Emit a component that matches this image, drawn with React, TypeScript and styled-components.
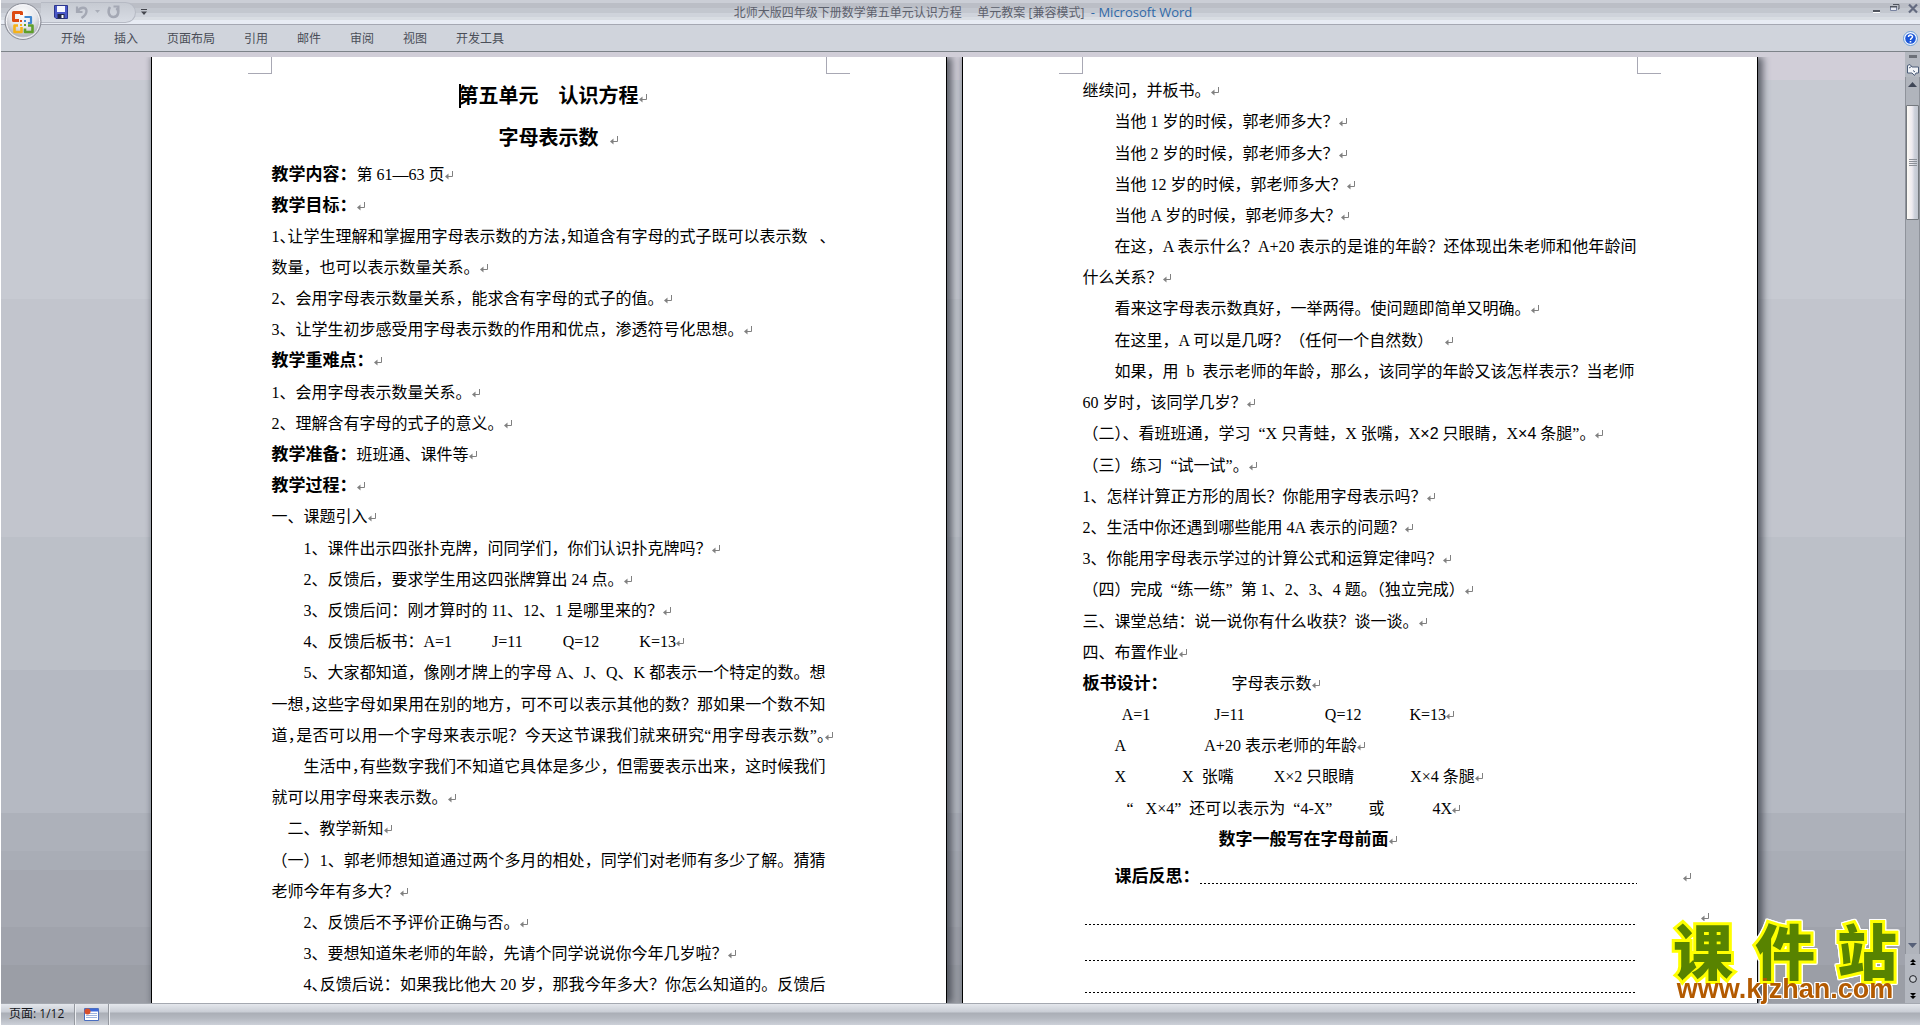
import React from "react";
import styled, { createGlobalStyle, css } from "styled-components";

const ui = `"Open Sans", "Noto Sans CJK SC", sans-serif`;
const doc = `"Liberation Serif", "Noto Sans CJK SC", serif`;

const GlobalStyle = createGlobalStyle`
  * { box-sizing: border-box; }
  body { margin: 0; overflow: hidden; background: #fff; }
  button { border: 0; padding: 0; background: none; color: inherit; font: inherit; cursor: default; }
  svg { display: block; }
`;

const Window = styled.div`
  display: flex;
  flex-direction: column;
  height: 100vh;
  padding-left: 1px;
  font: 12px/16px ${ui};
  color: #4a4e58;
  position: relative;
`;

/* ---------- title bar ---------- */

const TitleBar = styled.header`
  display: grid;
  grid-template-columns: 1fr auto 1fr;
  height: 25px;
  padding-left: 5px;
  border-bottom: 1px solid #a5a8b2;
  background: linear-gradient(#cbced6 0 3px, #bbbec6 3px 8px, #c3c7cf 8px 13px, #cfd3db 13px 17px, #d9dde3 17px 20px, #e8ecf4 20px);
`;

const QuickAccess = styled.div`
  display: flex;
  align-items: flex-start;
`;

const Pill = styled.div`
  display: flex;
  align-items: center;
  gap: 7px;
  height: 21px;
  margin: 2px 0 0 35px;
  padding: 0 15px 2px 13px;
  border: 1px solid #b6bac4;
  border-left: 0;
  border-radius: 0 11px 11px 0;
  background: linear-gradient(#c6cad2, #d8dce4);
`;

const Customize = styled.button`
  margin: 9px 0 0 5px;
`;

const Caption = styled.h1`
  margin: 0;
  padding-top: 2px;
  font: 400 12px/20px ${ui};
  white-space: pre;
  color: #5c606c;
`;

const Product = styled.span`
  font-size: 13px;
  color: #2f6aa8;
`;

const WindowButtons = styled.div`
  display: flex;
  justify-content: flex-end;
  align-items: flex-start;
  gap: 8px;
  padding: 3px 2px 0 0;
`;

const OfficeButton = styled.button`
  position: absolute;
  top: 2px;
  left: 4px;
  z-index: 2;
`;

/* ---------- ribbon tabs ---------- */

const Ribbon = styled.nav`
  display: flex;
  align-items: stretch;
  height: 27px;
  padding: 0 2px 0 46px;
  gap: 1px;
  border-bottom: 1px solid #7d8389;
  background: #d0d4dc;
`;

const Tab = styled.button`
  padding: 2px 14px 0;
`;

const Help = styled.button`
  margin-left: auto;
`;

/* ---------- work area ---------- */

const Work = styled.div`
  display: flex;
  flex: 1;
  min-height: 0;
`;

const Canvas = styled.main`
  flex: 1;
  display: flex;
  justify-content: center;
  gap: 15px;
  min-width: 0;
  padding: 5px 0 0 2px;
  overflow: hidden;
  background: linear-gradient(
    #d1ced8 28px,
    #c7cad2 28px 26%,
    #c2c5cd 26% 51%,
    #bcc0c8 51% 65%,
    #b5b9c2 65% 80%,
    #adb1ba 80% 84%,
    #a9adb6 84% 86%,
    #a5a8b1 86% 92%,
    #a0a3ac 92% 96%,
    #9b9ea6 96%
  );
`;

const Page = styled.article`
  flex: 0 0 796px;
  min-width: 0;
  padding: 18px 120px 0;
  border: solid #000;
  border-width: 0 1px;
  background: #fff;
  box-shadow: -2px 0 4px rgba(90, 94, 104, 0.35), 5px 0 7px rgba(60, 64, 74, 0.75);
  clip-path: inset(0 -14px 0 -8px);
  position: relative;
`;

const CropMark = styled.i<{ $side: "left" | "right" }>`
  position: absolute;
  top: 0;
  width: 24px;
  height: 17px;
  border-bottom: 1px solid #a8a8b4;
  ${(p) =>
    p.$side === "left"
      ? css`left: 96px; border-right: 1px solid #a8a8b4;`
      : css`right: 96px; border-left: 1px solid #a8a8b4;`}
`;

const Title = styled.h2`
  margin: 0;
  font: 700 20px/42px ${doc};
  color: #000;
  text-align: center;
  white-space: pre;
`;

const Caret = styled.span`
  display: inline-block;
  width: 2px;
  height: 24px;
  margin-right: -2px;
  vertical-align: -5px;
  background: #000;
`;

const Line = styled.p<{ $indent?: number; $tall?: boolean; $fill?: boolean }>`
  margin: 0;
  padding-left: ${(p) => (p.$indent ?? 0) * 16}px;
  font: 16px/${(p) => (p.$tall ? 32 : 31)}px ${doc};
  color: #000;
  white-space: ${(p) => (p.$fill ? "nowrap" : "pre")};
  text-align-last: ${(p) => (p.$fill ? "justify" : "left")};
`;

const Label = styled.b`
  font-size: 17px;
`;

const Half = styled.span`
  font-feature-settings: "halt";
`;

const Sans = styled.span`
  font-family: "Liberation Sans", sans-serif;
`;

const Mark = styled.svg<{ $gap: number }>`
  display: inline-block;
  width: 8px;
  height: 9px;
  margin-left: ${(p) => p.$gap}px;
  margin-right: ${(p) => -8 - p.$gap}px;
`;

const NoteRow = styled.div<{ $height: number }>`
  display: flex;
  align-items: flex-end;
  height: ${(p) => p.$height}px;
  padding-left: 2px;
  font: 16px/31px ${doc};
  color: #000;
`;

const NoteLabel = styled.span`
  padding-left: 30px;
`;

const Dots = styled.span<{ $raise?: boolean }>`
  flex: 1;
  height: 1px;
  margin-bottom: ${(p) => (p.$raise ? 8 : 0)}px;
  background: repeating-linear-gradient(90deg, #000 0 2px, transparent 2px 4px);
`;

const Outside = styled.span<{ $gap: number; $line: number }>`
  width: 0;
  line-height: ${(p) => p.$line}px;
  text-indent: ${(p) => p.$gap}px;
  white-space: nowrap;
`;

/* ---------- scroll bar ---------- */

const Scroll = styled.aside`
  display: flex;
  flex-direction: column;
  width: 15px;
  background: #b4b8c0;
`;

const SplitBox = styled.button`
  height: 3px;
  margin: 3px 3px 4px 4px;
  background: #6c7078;
`;

const RulerButton = styled.button`
  height: 15px;
  padding-left: 2px;
`;

const Track = styled.div`
  display: flex;
  flex-direction: column;
  flex: 1;
  border: solid #8f939b;
  border-width: 0 1px;
  background: #b0b4bc;
`;

const Arrow = styled.button`
  display: flex;
  justify-content: center;
  height: 16px;
  padding-top: 5px;
`;

const Thumb = styled.div`
  display: flex;
  align-items: center;
  justify-content: center;
  height: 115px;
  margin-top: 12px;
  border: 1px solid #74787e;
  border-radius: 1px;
  background: linear-gradient(90deg, #fcfaf4, #eeeaf0 45%, #ccd0da 70%, #c2c6d0);
`;

const Spacer = styled.div`
  flex: 1;
`;

const Browse = styled.div`
  display: flex;
  flex-direction: column;
  align-items: center;
  justify-content: space-around;
  height: 49px;
`;

/* ---------- status bar ---------- */

const StatusBar = styled.footer`
  display: flex;
  height: 22px;
  border-top: 1px solid #a4a8b0;
  background: linear-gradient(#e4e7ec, #c9cdd5 8px, #aaaeb6 9px, #b4b8c0 14px, #ccd0d8);
  color: #14161c;
`;

const StatusItem = styled.button`
  display: flex;
  align-items: center;
  padding: 0 10px 2px 8px;
  border-right: 1px solid #94989f;
  box-shadow: 1px 0 #eceef2;
  font-size: 12px;
`;

const MacroItem = styled(StatusItem)`
  padding: 0 9px;
`;

/* ---------- watermark ---------- */

const Watermark = styled.div`
  position: absolute;
  right: 23px;
  bottom: 22px;
  z-index: 3;
  width: 224px;
  filter: drop-shadow(1px 0 #fff) drop-shadow(-1px 0 #fff) drop-shadow(0 1px #fff) drop-shadow(0 -1px #fff);
`;

const Brand = styled.div`
  display: flex;
  justify-content: space-between;
  font: 900 60px/52px "Noto Sans CJK SC", sans-serif;
  color: #588300;
  -webkit-text-stroke: 6px #ffff00;
  paint-order: stroke fill;
`;

const Site = styled.a`
  display: block;
  font: 700 27px/28px "Liberation Sans", sans-serif;
  color: #b35a00;
  text-align: center;
  text-decoration: none;
`;

/* ---------- drawings ---------- */

const Ret = ({ gap = 0 }: { gap?: number }) => (
  <Mark $gap={gap} viewBox="0 0 8 9" aria-hidden="true">
    <path d="M7.5 0V5.5H2" fill="none" stroke="#808080" />
    <path d="M0 5.5L3.5 2.5V8.5Z" fill="#808080" />
  </Mark>
);

const OfficeLogo = () => (
  <svg width="38" height="38" viewBox="0 0 38 38">
    <defs>
      <radialGradient id="orb" cx="50%" cy="30%" r="75%">
        <stop offset="0" stopColor="#ffffff" />
        <stop offset=".5" stopColor="#e4e5ea" />
        <stop offset=".8" stopColor="#b4b6be" />
        <stop offset="1" stopColor="#f4f4f8" />
      </radialGradient>
    </defs>
    <circle cx="19" cy="19.5" r="18" fill="url(#orb)" stroke="#8b8e98" />
    <circle cx="19" cy="19.5" r="16.6" fill="none" stroke="#f8f8fb" />
    <g fill="none" strokeWidth="3" strokeLinejoin="round">
      <path d="M15 18.500H9.500V10.500H17.500V13" stroke="#dd4a12" />
      <path d="M20.500 15H27V21H24" stroke="#3f86cf" strokeWidth="2.200" />
      <path d="M17.500 25V30H10.500V23.500H14" stroke="#f5b21a" strokeWidth="2.600" />
      <path d="M24 23.500H28.500V30H21V26.500" stroke="#5f9f2b" strokeWidth="2.600" />
    </g>
    <path d="M16 18h2v2h-2z" fill="#dd4a12" />
    <path d="M20 18h2v2h-2z" fill="#3f86cf" />
    <path d="M16 22h2v2h-2z" fill="#f5b21a" />
    <path d="M20 22h2v2h-2z" fill="#5f9f2b" />
  </svg>
);

const SaveIcon = () => (
  <svg width="14" height="14" viewBox="0 0 14 14">
    <path d="M.5.5h13v13H2L.5 12z" fill="#4a58c8" stroke="#2c368c" />
    <path d="M3 1h8v6H3z" fill="#f4f6ff" />
    <path d="M3.500 9h7v4.500h-7z" fill="#20264a" />
    <path d="M7.500 10h2v3h-2z" fill="#fff" />
  </svg>
);

const UndoIcon = () => (
  <svg width="13" height="14" viewBox="0 0 13 14">
    <path d="M2 1.500V7H7.500" fill="none" stroke="#a4a8b4" strokeWidth="2.200" />
    <path d="M3 6C5 2 11.500 1.500 11.500 6C11.500 9.500 9 11.500 6.500 13" fill="none" stroke="#a4a8b4" strokeWidth="2.400" />
  </svg>
);

const RedoIcon = () => (
  <svg width="13" height="14" viewBox="0 0 13 14">
    <path d="M6.500 1.500H11.500V6.500" fill="none" stroke="#a4a8b4" strokeWidth="2" />
    <path d="M3 2C.5 6 1.500 12 6.500 12S12.500 6 9.500 3" fill="none" stroke="#a4a8b4" strokeWidth="2.600" />
  </svg>
);

const SmallDown = () => (
  <svg width="5" height="3" viewBox="0 0 5 3"><path d="M0 0h5L2.500 3z" fill="#a9adb8" /></svg>
);

const Grip = () => (
  <svg width="8" height="8" viewBox="0 0 8 8">
    <path d="M0 .5h8M0 2.500h8M0 4.500h8M0 6.500h8" stroke="#8c9098" />
  </svg>
);

const tabs = ["开始", "插入", "页面布局", "引用", "邮件", "审阅", "视图", "开发工具"];

const H = ({ children }: { children: React.ReactNode }) => <Half>{children}</Half>;

const FirstPage = () => (
  <Page>
    <CropMark $side="left" />
    <CropMark $side="right" />
    <Title><Caret />第五单元　认识方程<Ret /></Title>
    <Title>字母表示数<Ret gap={11} /></Title>
    <Line><Label>教学内容：</Label>第 61—63 页<Ret /></Line>
    <Line><Label>教学目标：</Label><Ret /></Line>
    <Line>1<H>、</H>让学生理解和掌握用字母表示数的方法<H>，</H>知道含有字母的式子既可以表示数{"   "}<H>、</H></Line>
    <Line>数量，也可以表示数量关系。<Ret /></Line>
    <Line>2、会用字母表示数量关系，能求含有字母的式子的值。<Ret /></Line>
    <Line>3、让学生初步感受用字母表示数的作用和优点，渗透符号化思想。<Ret /></Line>
    <Line $tall><Label>教学重难点：</Label><Ret /></Line>
    <Line>1、会用字母表示数量关系。<Ret /></Line>
    <Line>2、理解含有字母的式子的意义。<Ret /></Line>
    <Line><Label>教学准备：</Label>班班通、课件等<Ret /></Line>
    <Line><Label>教学过程：</Label><Ret /></Line>
    <Line $tall>一、课题引入<Ret /></Line>
    <Line $indent={2}>1、课件出示四张扑克牌，问同学们，你们认识扑克牌吗？<Ret /></Line>
    <Line $indent={2}>2、反馈后，要求学生用这四张牌算出 24 点。<Ret /></Line>
    <Line $indent={2}>3、反馈后问：刚才算时的 11、12、1 是哪里来的？<Ret /></Line>
    <Line $indent={2}>4、反馈后板书：A=1{"          "}J=11{"          "}Q=12{"          "}K=13<Ret /></Line>
    <Line $indent={2} $fill $tall>5、大家都知道，像刚才牌上的字母 A、J、Q、K 都表示一个特定的数。想</Line>
    <Line $fill>一想<H>，</H>这些字母如果用在别的地方，可不可以表示其他的数？那如果一个数不知</Line>
    <Line $fill>道<H>，</H>是否可以用一个字母来表示呢？今天这节课我们就来研究“用字母表示数”<H>。</H><Ret /></Line>
    <Line $indent={2} $fill>生活中<H>，</H>有些数字我们不知道它具体是多少，但需要表示出来，这时候我们</Line>
    <Line>就可以用字母来表示数。<Ret /></Line>
    <Line $indent={1} $tall>二、教学新知<Ret /></Line>
    <Line $fill>（一）1、郭老师想知道通过两个多月的相处，同学们对老师有多少了解。猜猜</Line>
    <Line>老师今年有多大？<Ret /></Line>
    <Line $indent={2}>2、反馈后不予评价正确与否。<Ret /></Line>
    <Line $indent={2}>3、要想知道朱老师的年龄，先请个同学说说你今年几岁啦？<Ret /></Line>
    <Line $indent={2} $fill $tall>4<H>、</H>反馈后说：如果我比他大 20 岁，那我今年多大？你怎么知道的。反馈后</Line>
  </Page>
);

const SecondPage = () => (
  <Page>
    <CropMark $side="left" />
    <CropMark $side="right" />
    <Line>继续问，并板书。<Ret /></Line>
    <Line $indent={2} $tall>当他 1 岁的时候，郭老师多大？<Ret /></Line>
    <Line $indent={2}>当他 2 岁的时候，郭老师多大？<Ret /></Line>
    <Line $indent={2}>当他 12 岁的时候，郭老师多大？<Ret /></Line>
    <Line $indent={2}>当他 A 岁的时候，郭老师多大？<Ret /></Line>
    <Line $indent={2} $fill>在这，A 表示什么？A+20 表示的是谁的年龄？还体现出朱老师和他年龄间</Line>
    <Line>什么关系？<Ret /></Line>
    <Line $indent={2} $tall>看来这字母表示数真好，一举两得。使问题即简单又明确。<Ret /></Line>
    <Line $indent={2}>在这里，A 可以是几呀？（任何一个自然数）{"   "}<Ret /></Line>
    <Line $indent={2}>如果，用{"  "}b{"  "}表示老师的年龄，那么，该同学的年龄又该怎样表示？当老师</Line>
    <Line>60 岁时，该同学几岁？<Ret /></Line>
    <Line $tall>（二）、看班班通，学习{"  "}“X 只青蛙，X 张嘴，X<Sans>×2</Sans> 只眼睛，X<Sans>×4</Sans> 条腿”。<Ret /></Line>
    <Line>（三）练习{"  "}“试一试”。<Ret /></Line>
    <Line>1、怎样计算正方形的周长？你能用字母表示吗？<Ret /></Line>
    <Line>2、生活中你还遇到哪些能用 4A 表示的问题？<Ret /></Line>
    <Line>3、你能用字母表示学过的计算公式和运算定律吗？<Ret /></Line>
    <Line $tall>（四）完成{"  "}“练一练”{"  "}第 1、2、3、4 题。（独立完成）<Ret /></Line>
    <Line>三、课堂总结：说一说你有什么收获？谈一谈。<Ret /></Line>
    <Line>四、布置作业<Ret /></Line>
    <Line><Label>板书设计：</Label>{"                "}字母表示数<Ret /></Line>
    <Line>{"          "}A=1{"                "}J=11{"                    "}Q=12{"            "}K=13<Ret /></Line>
    <Line $indent={2}>A{"                    "}A+20 表示老师的年龄<Ret /></Line>
    <Line $indent={2} $tall>X{"              "}X{"  "}张嘴{"          "}X×2 只眼睛{"              "}X×4 条腿<Ret /></Line>
    <Line>{"           "}“{"   "}X×4”{"  "}还可以表示为{"  "}“4-X”{"         "}或{"            "}4X<Ret /></Line>
    <Line>{"                                  "}<Label>数字一般写在字母前面</Label><Ret /></Line>
    <NoteRow $height={37}>
      <NoteLabel><Label>课后反思：</Label></NoteLabel>
      <Dots $raise />
      <Outside $gap={46} $line={31}><Ret /></Outside>
    </NoteRow>
    <NoteRow $height={33}>
      <Dots />
      <Outside $gap={64} $line={16}><Ret /></Outside>
    </NoteRow>
    <NoteRow $height={36}><Dots /></NoteRow>
    <NoteRow $height={32}><Dots /></NoteRow>
  </Page>
);

export default function App() {
  return (
    <Window>
      <GlobalStyle />
      <OfficeButton aria-label="Office"><OfficeLogo /></OfficeButton>
      <TitleBar>
        <QuickAccess>
          <Pill>
            <button aria-label="保存"><SaveIcon /></button>
            <button aria-label="撤消"><UndoIcon /></button>
            <button aria-label="撤消选项"><SmallDown /></button>
            <button aria-label="恢复"><RedoIcon /></button>
          </Pill>
          <Customize aria-label="自定义快速访问工具栏">
            <svg width="6" height="6" viewBox="0 0 6 6">
              <path d="M0 0h6v1H0zM0 2.500h6L3 6z" fill="#44464e" />
            </svg>
          </Customize>
        </QuickAccess>
        <Caption>北师大版四年级下册数学第五单元认识方程{"    "} 单元教案 [兼容模式] <Product> - Microsoft Word</Product></Caption>
        <WindowButtons>
          <button aria-label="最小化">
            <svg width="10" height="11" viewBox="0 0 10 11">
              <path d="M1 7h7v2H1z" fill="#50545e" /><path d="M1 9h7v1H1z" fill="#fff" />
            </svg>
          </button>
          <button aria-label="还原">
            <svg width="10" height="11" viewBox="0 0 10 11">
              <path d="M3 1.500h6V6H8" fill="none" stroke="#50545e" />
              <path d="M.5 3.500h6v4h-6z" fill="#e6e9f2" stroke="#7882a0" />
              <path d="M0 3h7v1.500H0z" fill="#50545e" />
            </svg>
          </button>
          <button aria-label="关闭">
            <svg width="10" height="11" viewBox="0 0 10 11">
              <path d="M1 1.500L9 9.500M9 1.500L1 9.500" stroke="#646b80" strokeWidth="2.200" />
            </svg>
          </button>
        </WindowButtons>
      </TitleBar>
      <Ribbon>
        {tabs.map((t) => <Tab key={t}>{t}</Tab>)}
        <Help aria-label="帮助">
          <svg width="15" height="15" viewBox="0 0 15 15">
            <circle cx="7.5" cy="7.5" r="7" fill="#f4f8ff" stroke="#6a9bd4" />
            <circle cx="7.5" cy="7.5" r="5.300" fill="#1c56d8" />
            <path d="M5.500 6C5.500 3.500 9.500 3.500 9.500 5.800C9.500 7.300 7.500 7.300 7.500 9" fill="none" stroke="#fff" strokeWidth="1.500" />
            <path d="M6.700 10h1.600v1.500H6.700z" fill="#fff" />
          </svg>
        </Help>
      </Ribbon>
      <Work>
        <Canvas>
          <FirstPage />
          <SecondPage />
        </Canvas>
        <Scroll>
          <SplitBox aria-label="拆分" />
          <RulerButton aria-label="标尺">
            <svg width="12" height="12" viewBox="0 0 12 12">
              <path d="M.5 1.500L3 .5L5 3H11.500V9H9L7.500 11.500L5 9H.5Z" fill="#f2f4f8" stroke="#4c5c78" />
              <path d="M2 4L4.500 2.500M6 6.500L8 8" stroke="#4c5c78" />
            </svg>
          </RulerButton>
          <Track>
            <Arrow aria-label="向上滚动">
              <svg width="9" height="5" viewBox="0 0 9 5"><path d="M0 5L4.500 0L9 5z" fill="#3f4656" /></svg>
            </Arrow>
            <Thumb><Grip /></Thumb>
            <Spacer />
            <Arrow aria-label="向下滚动">
              <svg width="9" height="5" viewBox="0 0 9 5"><path d="M0 0H9L4.500 5z" fill="#566078" /></svg>
            </Arrow>
          </Track>
          <Browse>
            <button aria-label="上一页">
              <svg width="6" height="7" viewBox="0 0 6 7"><path d="M3 0L6 3H0zM3 3L6 6H0z" fill="#000" /></svg>
            </button>
            <button aria-label="选择浏览对象">
              <svg width="8" height="8" viewBox="0 0 8 8"><circle cx="4" cy="4" r="3.400" fill="#c8ccd2" stroke="#1c1e24" /></svg>
            </button>
            <button aria-label="下一页">
              <svg width="6" height="7" viewBox="0 0 6 7"><path d="M0 1H6L3 4zM0 4H6L3 7z" fill="#000" /></svg>
            </button>
          </Browse>
        </Scroll>
      </Work>
      <StatusBar>
        <StatusItem>页面: 1/12</StatusItem>
        <MacroItem aria-label="录制宏">
          <svg width="15" height="13" viewBox="0 0 15 13">
            <path d="M.5.5h14v12H.5z" fill="#fff" stroke="#4a6ec0" />
            <path d="M1 1h13v2.500H1z" fill="#3c68d8" />
            <path d="M2 5.500h11M2 7.500h11M2 9.500h11" stroke="#9db4e0" />
            <circle cx="3.500" cy="3.500" r="3" fill="#d8502c" />
          </svg>
        </MacroItem>
      </StatusBar>
      <Watermark>
        <Brand><span>课</span><span>件</span><span>站</span></Brand>
        <Site href="#">www.kjzhan.com</Site>
      </Watermark>
    </Window>
  );
}
